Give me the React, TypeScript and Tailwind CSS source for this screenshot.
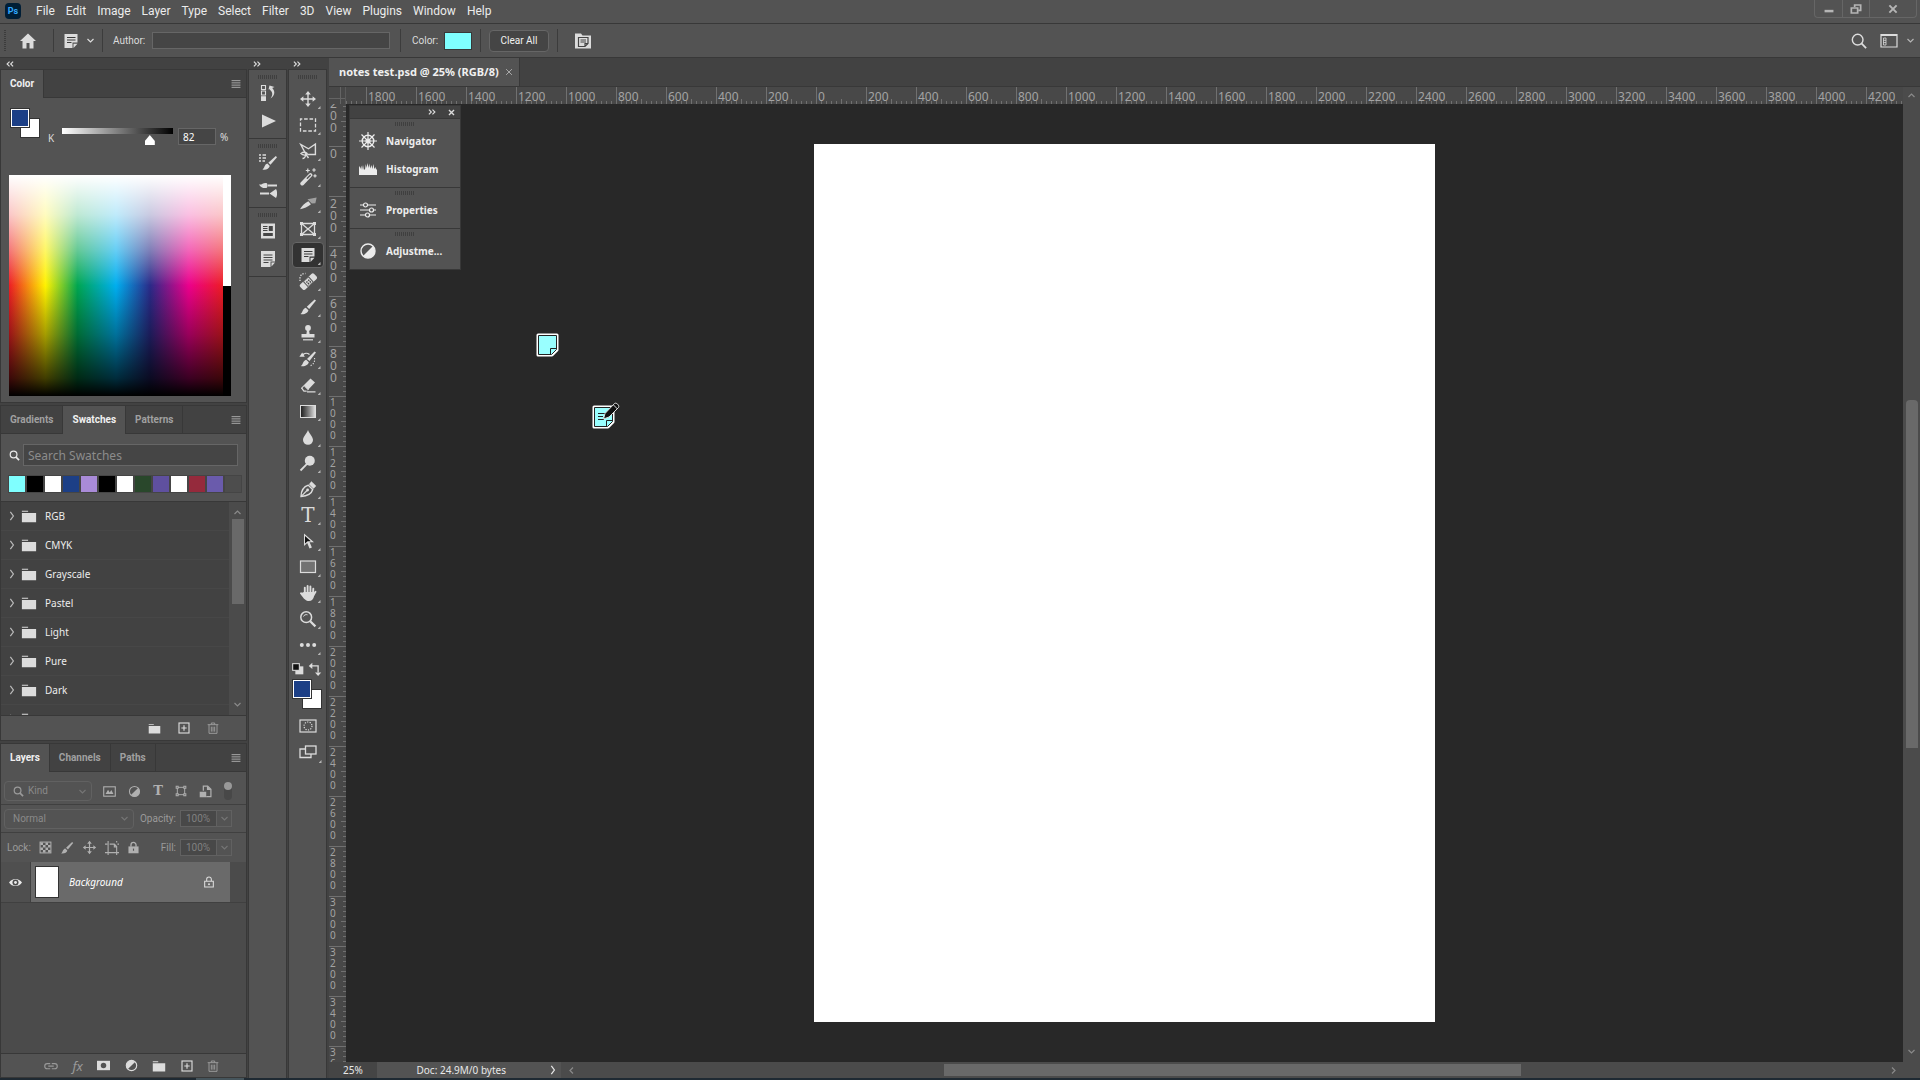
import { useState } from "react"
import type { ReactNode } from "react"

const menus = ["File", "Edit", "Image", "Layer", "Type", "Select", "Filter", "3D", "View", "Plugins", "Window", "Help"]

const swatches = [
    "bg-[#7fffff]",
    "bg-black",
    "bg-white",
    "bg-[#1c3f86]",
    "bg-[#a98bd8]",
    "bg-black",
    "bg-white",
    "bg-[#29472b]",
    "bg-[#5f509f]",
    "bg-white",
    "bg-[#952a3c]",
    "bg-[#6a5bac]",
    "bg-[#4d4d4d]",
]

const swatchGroups = ["RGB", "CMYK", "Grayscale", "Pastel", "Light", "Pure", "Dark", "Pale"]

const tools = [
    "move",
    "marquee",
    "lasso",
    "wand",
    "slice",
    "frame",
    "note",
    "heal",
    "brush",
    "stamp",
    "history-brush",
    "eraser",
    "gradient",
    "blur",
    "dodge",
    "pen",
    "type",
    "path-select",
    "rectangle",
    "hand",
    "zoom",
    "more",
]

const horizontalMarks = Array.from({ length: 32 }, (_, i) => Math.abs(i * 200 - 2000))
const verticalMarks = Array.from({ length: 20 }, (_, i) => Math.abs(i * 200 - 200))

// every icon is drawn on an 18 x 18 grid
const icons: Record<string, ReactNode> = {
    move: (
        <>
            <path d="M9 3v12M3 9h12" stroke="currentColor" strokeWidth="1.4" />
            <path d="M9 1l2.8 3.4H6.2zM9 17l2.8-3.4H6.2zM1 9l3.4-2.8v5.6zM17 9l-3.4-2.8v5.6z" />
        </>
    ),
    marquee: <rect x="1.5" y="3" width="15" height="12" fill="none" stroke="currentColor" strokeWidth="1.3" strokeDasharray="3.6 1.8" strokeDashoffset="1.8" />,
    lasso: (
        <g fill="none" stroke="currentColor" strokeWidth="1.4">
            <path d="M6 10.5L1.8 2.5L9.5 6.8L16.4 2V12.5H8.5" />
            <path d="M8.5 12.5C8 10 4.5 9.5 2 11.5C4 13.5 7.5 13.5 8.5 12.5M6.5 13C6.5 15 5 16.5 3.5 16.5M6 11l3.5 5" />
        </g>
    ),
    wand: (
        <>
            <path d="M3.2 15.6L11.5 7" stroke="currentColor" strokeWidth="3.8" strokeLinecap="round" />
            <path d="M8.3 10.3L11.3 7.2" stroke="#535353" strokeWidth="1.4" strokeLinecap="round" />
            <path d="M8.8.5v4M6.8 2.5h4M15 .2v3.6M13.2 2h3.6M16 6.2v3.2M14.4 7.8h3.2" stroke="currentColor" strokeWidth="1.2" />
        </>
    ),
    slice: (
        <>
            <path d="M1 15.2C3 11.5 6 8.8 9.3 7.2L12 10.3C8.8 13 5 14.6 1 15.2z" />
            <path d="M8.5 5.2L17.6 3.6L16.4 9.2L12.8 9.6z" fill="#a0a0a0" />
        </>
    ),
    frame: (
        <>
            <path d="M2.5 3.5h13v11h-13zM2.5 3.5l13 11M15.5 3.5l-13 11" fill="none" stroke="currentColor" strokeWidth="1.3" />
            <path d="M1 2h3v3H1zM14 2h3v3h-3zM1 13h3v3H1zM14 13h3v3h-3z" />
        </>
    ),
    note: (
        <>
            <path d="M2.5 2h13v8.5h-5V16h-8z" />
            <path d="M11.5 11.7h4L11.5 16z" />
            <path d="M5 5.5h8.5M5 8h8.5M5 10.5h4.5" stroke="#3a3a3a" strokeWidth="1" />
        </>
    ),
    heal: (
        <>
            <g transform="rotate(-43 9 10)">
                <rect x="0" y="6.4" width="19" height="7.2" rx="2" />
                <rect x="5.4" y="6.4" width="8" height="7.2" fill="#535353" />
                <rect x="6.4" y="7" width="6" height="6" />
                <path d="M7.5 8.5h1.5V10H7.5zM10 8.5h1.5V10H10zM7.5 10.7h1.5v1.5H7.5zM10 10.7h1.5v1.5H10z" fill="#454545" />
            </g>
            <path d="M1 9V6C1 3.5 3 1.5 6.5 1.5" fill="none" stroke="currentColor" strokeWidth="1.3" strokeDasharray="1.3 1.3" />
        </>
    ),
    brush: (
        <>
            <path d="M15.6 1.4L17 2.6L10.2 11L7.8 8.8z" />
            <path d="M6.8 9.7l2.6 2.5C9 15 5.2 16.8 1.4 16C3.8 14.8 3.4 10.6 6.8 9.7z" />
        </>
    ),
    stamp: (
        <>
            <circle cx="9" cy="4" r="2.9" />
            <path d="M8 6h2l.6 4h4.9v3.4h-13V10h4.9z" />
            <path d="M4 15.8h10" stroke="currentColor" strokeWidth="1.2" />
        </>
    ),
    "history-brush": (
        <>
            <path d="M15.5 1.4L17 2.6L10.5 11L8 8.9z" />
            <path d="M7.2 9.7l2.6 2.5C9.4 15 5.6 16.8 1.8 16C4.2 14.8 3.8 10.6 7.2 9.7z" />
            <path d="M.4 6.8L3.2 2.6L5.8 6.8z" />
            <path d="M3.5 5.2C5.5 2.8 8.5 3 10.5 4.5" fill="none" stroke="currentColor" strokeWidth="1.3" />
            <path d="M15.5 8c.8 3.5-1 6.5-4.5 8" fill="none" stroke="currentColor" strokeWidth="1.1" strokeDasharray="1.2 1.5" />
        </>
    ),
    eraser: (
        <>
            <path d="M2 12L11.5 2.5L16 6.5L7.5 15.5H4.5z" />
            <path d="M5.5 9.8l4 4l-1.8 1.2H5L3.2 12.2z" fill="#535353" />
            <path d="M5.5 9.8l4 4M2.6 12l2.4 3h2.5M8 15.8h8.5" fill="none" stroke="currentColor" strokeWidth="1.2" />
        </>
    ),
    blur: <path d="M9 2C10 5.5 14 8.5 14 12a5 4.8 0 0 1-10 0C4 8.5 8 5.5 9 2z" />,
    dodge: (
        <>
            <circle cx="10.8" cy="6.8" r="5" />
            <path d="M1.5 16.5L8 9.8" stroke="currentColor" strokeWidth="1.8" />
        </>
    ),
    pen: (
        <>
            <path d="M2 16.5C2.2 11 3.5 7 9.3 5.2L13.7 9.5C12.5 14 8 16 2 16.5z" fill="none" stroke="currentColor" strokeWidth="1.4" />
            <path d="M2.2 16.3L8 10.5" stroke="currentColor" strokeWidth="1.2" />
            <circle cx="8.6" cy="10" r="1.4" />
            <path d="M10 4.3L12.4 1.3L17.2 6L14.5 8.7z" />
        </>
    ),
    "path-select": (
        <>
            <path d="M5 1.5V14l3.2-3l2.3 5.5l2.4-1L10.6 10.2H15z" />
            <path d="M6 4v7.5L8.6 9.3L11.8 9.2z" fill="#111" />
        </>
    ),
    rectangle: <rect x="1.5" y="3" width="15" height="11.5" fill="#727272" stroke="currentColor" strokeWidth="1.2" />,
    hand: (
        <>
            <path d="M5.8 9V3.6M8.6 8V2M11.4 8V2.5M14 10L14.3 4.8M5.2 12L2 9.3M14.3 11.5L16.5 7.8" stroke="currentColor" strokeWidth="1.9" strokeLinecap="round" />
            <path d="M4.9 8h10.2v3.5c-.3 3.5-2.2 5.5-5.3 5.5c-2.6 0-4.6-1.2-8.5-7.5z" />
        </>
    ),
    zoom: (
        <>
            <circle cx="7.2" cy="7.2" r="5.4" fill="none" stroke="currentColor" strokeWidth="1.5" />
            <path d="M4.5 6.5C5 5 6.8 4.2 8.5 4.8" fill="none" stroke="currentColor" strokeWidth="1" />
            <path d="M11.2 11.2L16.4 16.4" stroke="currentColor" strokeWidth="2.2" />
        </>
    ),
    find: (
        <>
            <circle cx="7.5" cy="7.5" r="6" fill="none" stroke="currentColor" strokeWidth="1.6" />
            <path d="M11.8 11.8L17 17" stroke="currentColor" strokeWidth="2" />
        </>
    ),
    more: (
        <>
            <circle cx="2.8" cy="9" r="2" />
            <circle cx="9" cy="9" r="2" />
            <circle cx="15.2" cy="9" r="2" />
        </>
    ),
    defaults: (
        <>
            <path d="M6 6h9v9H6z" />
            <rect x="3" y="3" width="7.5" height="7.5" fill="#111" stroke="currentColor" strokeWidth="1.2" />
        </>
    ),
    swap: (
        <>
            <path d="M5 5.5h7.5V13" fill="none" stroke="currentColor" strokeWidth="1.5" />
            <path d="M2 5.5l4-3.5v7zM12.5 17l-3.5-4h7z" />
        </>
    ),
    mask: (
        <>
            <rect x="1" y="3" width="16" height="12" fill="none" stroke="currentColor" strokeWidth="1.2" />
            <circle cx="9" cy="9" r="4" fill="none" stroke="currentColor" strokeWidth="1.2" strokeDasharray="1.2 1.3" />
        </>
    ),
    screen: (
        <>
            <path d="M6 6H1v8.5h11V11" fill="none" stroke="currentColor" strokeWidth="1.3" />
            <rect x="6.5" y="3" width="10.5" height="8" fill="#535353" stroke="currentColor" strokeWidth="1.3" />
        </>
    ),
    history: (
        <>
            <path d="M2.5 1.5h4v4h-4zM2.5 7h4v4h-4z" fill="none" stroke="currentColor" strokeWidth="1.1" />
            <path d="M2 12.2h5V17H2z" />
            <path d="M9.5 5.5L10.5 1.5L15.5 3z" />
            <path d="M12 3C16.5 6 16.5 11.5 11.5 14.5C14 11 14 8 10.5 5.5z" />
        </>
    ),
    play: <path d="M3 2.5L17 9L3 15.5z" />,
    brushes: (
        <>
            <path d="M0 2h2M3.5 2h3.5M0 5h2M3.5 5h3.5M0 8h2M3.5 8h2.5" stroke="currentColor" strokeWidth="1.3" />
            <path d="M16.8 3L18 4.2L11.5 11.8L9.3 9.8z" />
            <path d="M8.4 10.6l2.4 2.3C10 15.8 7 17.2 3.5 16.5C5.8 15.2 5.2 11.4 8.4 10.6z" />
        </>
    ),
    "brush-settings": (
        <>
            <path d="M9 4.5h9M1 12.5h9" stroke="currentColor" strokeWidth="2.2" />
            <path d="M0 3.5C3 4 4 1.5 7.5 2C9 3 9 6 7.5 7C4 7.5 2 6.5 0 3.5z" />
            <path d="M10.5 12.5L17 8C18.5 10.5 18.5 14.5 17 17z" />
        </>
    ),
    libraries: (
        <>
            <path d="M2 1.5h14v15H2z" />
            <path d="M4 4.5h4.5M4 6.5h4.5M4 8.5h4.5" stroke="#454545" strokeWidth="1" />
            <path d="M9.8 4h4v5h-4zM4.2 11h9.6v3H4.2z" fill="#454545" />
        </>
    ),
    notes: (
        <>
            <path d="M2 1h14v10.5h-4.5V17H2z" />
            <path d="M12.5 12.5H16L12.5 16.5z" />
            <path d="M4.5 5h9M4.5 7.5h9M4.5 10h9M4.5 12.5h5" stroke="#454545" strokeWidth="1" />
        </>
    ),
    home: <path d="M9 1.5L1 9h2.5v7.5h4V11h3v5.5h4V9H17z" />,
    "notes-panel": (
        <>
            <path d="M1 1.5h6l1.5 2H17v13H1z" />
            <path d="M4.5 5.5h9.5v6l-3 3H4.500zM11 14.5v-3h3" fill="none" stroke="#454545" strokeWidth="1.2" />
            <path d="M6.5 8h5.5M6.5 10h5.5" stroke="#454545" strokeWidth="1" />
        </>
    ),
    navigator: (
        <g fill="none" stroke="currentColor">
            <circle cx="9" cy="9" r="5.8" strokeWidth="1.4" />
            <circle cx="9" cy="9" r="2" strokeWidth="1.2" />
            <path d="M9 0v18M0 9h18M2.5 2.5l13 13M15.5 2.5l-13 13" strokeWidth="1.2" />
        </g>
    ),
    histogram: <path d="M0 15V7.5l.8-1.500L1.5 9l.8-3.500L3 10l1-5l.8 4.500L6 9.500L6.800 4L7.500 8l1-5l1 5L10.300 3.500l.9 5L12.500 5l.8 4L14.500 4l.8 5L16.500 7l.7 3L18 8.500V15z" />,
    properties: (
        <g fill="none" stroke="currentColor" strokeWidth="1.2">
            <path d="M1 4h3.5M8.5 4H17M1 9h9.5M14.5 9H17M1 14h5.5M10.5 14H17" />
            <circle cx="6.5" cy="4" r="2" />
            <circle cx="12.5" cy="9" r="2" />
            <circle cx="8.5" cy="14" r="2" />
        </g>
    ),
    adjust: (
        <>
            <circle cx="9" cy="9" r="7" fill="none" stroke="currentColor" strokeWidth="1.4" />
            <path d="M14 4A7 7 0 0 1 4 14z" />
        </>
    ),
    "adjust-layer": (
        <>
            <circle cx="9" cy="9" r="7" />
            <path d="M14 4A7 7 0 0 1 4 14z" fill="#535353" />
            <circle cx="9" cy="9" r="7.2" fill="none" stroke="currentColor" strokeWidth="1.6" />
        </>
    ),
    folder: <path d="M1 3h7v1.3H1zM1 5.5h16V16H1z" />,
    add: (
        <>
            <rect x="1.5" y="1.5" width="15" height="15" fill="none" stroke="currentColor" strokeWidth="1.7" />
            <path d="M9 5v8M5 9h8" stroke="currentColor" strokeWidth="1.7" />
        </>
    ),
    trash: (
        <g fill="none" stroke="currentColor" strokeWidth="1.5">
            <path d="M1 4h16M6.5 4V1.5h5V4M3 4.5V17h12V4.5M6.5 7v7.5M9 7v7.5M11.5 7v7.5" />
        </g>
    ),
    search: (
        <>
            <circle cx="7.5" cy="7.5" r="5.5" fill="none" stroke="currentColor" strokeWidth="2" />
            <path d="M11.5 11.5L16.5 16.5" stroke="currentColor" strokeWidth="2.8" />
        </>
    ),
    image: (
        <>
            <rect x="1" y="2.5" width="16" height="13" fill="none" stroke="currentColor" strokeWidth="1.5" />
            <path d="M3.5 12.5L7 6.5l2.3 4L11.5 7l3 5.5z" />
        </>
    ),
    shape: (
        <>
            <path d="M3.5 3.5h11v11h-11z" fill="none" stroke="currentColor" strokeWidth="1.4" />
            <path d="M1 1h4.5v4.5H1zM12.5 1H17v4.5h-4.5zM1 12.5h4.5V17H1zM12.5 12.5H17V17h-4.5z" />
            <path d="M2.5 2.5h1.5v1.5H2.5zM14 2.5h1.5v1.5H14zM2.5 14h1.5v1.5H2.5zM14 14h1.5v1.5H14z" fill="#535353" />
        </>
    ),
    smart: (
        <>
            <path d="M6 8V1.5h6l4.5 4.5v10H10" fill="none" stroke="currentColor" strokeWidth="1.7" />
            <path d="M11 1v6h6M1 9.5h9V17H1z" />
        </>
    ),
    checker: (
        <>
            <rect x="1.5" y="1.5" width="15" height="15" fill="none" stroke="currentColor" strokeWidth="1.4" />
            <path d="M2 2h3.5v3.5H2zM9 2h3.5v3.5H9zM5.5 5.5H9V9H5.5zM12.5 5.5H16V9h-3.5zM2 9h3.5v3.5H2zM9 9h3.5v3.5H9zM5.5 12.5H9V16H5.5zM12.5 12.5H16V16h-3.5z" />
        </>
    ),
    artboard: (
        <g fill="none" stroke="currentColor" strokeWidth="1.4">
            <path d="M4 0v18M0 4h3M6 4h6l3 3v11M0 15h18M12 4v3.5h3.5" />
            <path d="M16 4h2M15 0v2" />
        </g>
    ),
    lock: (
        <>
            <path d="M5.5 8V5.5a3.5 3.5 0 0 1 7 0V8" fill="none" stroke="currentColor" strokeWidth="1.8" />
            <path d="M2 7.5h14V17H2z" />
            <path d="M8.2 10.5h1.6v3H8.2z" fill="#535353" />
        </>
    ),
    "lock-outline": (
        <>
            <path d="M5.5 8V5a3.5 3.5 0 0 1 7 0v3M2.5 8h13v8.5h-13z" fill="none" stroke="currentColor" strokeWidth="1.6" />
            <circle cx="9" cy="12.2" r="1.5" />
        </>
    ),
    eye: (
        <>
            <path d="M0 9C4 2.5 14 2.5 18 9C14 15.5 4 15.5 0 9z" />
            <circle cx="9" cy="9" r="4.2" fill="#4b4b4b" />
            <circle cx="9" cy="9" r="2" />
        </>
    ),
    link: (
        <g fill="none" stroke="currentColor" strokeWidth="1.5">
            <path d="M8 6H4.2a3 3 0 0 0 0 6.5H8M10 6h3.8a3 3 0 0 1 0 6.5H10M5.5 9.2h7" />
        </g>
    ),
    "layer-mask": (
        <>
            <path d="M0 2.5h18v13H0z" />
            <circle cx="9" cy="9" r="3.8" fill="#535353" />
        </>
    ),
    workspace: (
        <>
            <path d="M1 2.5h16v12.5H1z" fill="none" stroke="currentColor" strokeWidth="1.2" />
            <path d="M1 2h16v2H1z" />
            <path d="M3.5 6h2.5v7H3.5zM3.5 8.3h2.5M3.5 10.6h2.5" fill="none" stroke="currentColor" strokeWidth=".8" />
        </>
    ),
    "chevron-down": <path d="M3 6l6 6l6-6" fill="none" stroke="currentColor" strokeWidth="2.4" />,
    "chevron-up": <path d="M3 12l6-6l6 6" fill="none" stroke="currentColor" strokeWidth="2.4" />,
    "chevron-right": <path d="M6 1.5l5.5 7.5L6 16.5" fill="none" stroke="currentColor" strokeWidth="2.2" />,
    "chevron-left": <path d="M12 3L6 9l6 6" fill="none" stroke="currentColor" strokeWidth="2.4" />,
    expand: <path d="M2 3.5L7.5 9L2 14.5M10 3.5L15.5 9L10 14.5" fill="none" stroke="currentColor" strokeWidth="2.6" />,
    collapse: <path d="M8 3.5L2.5 9L8 14.5M16 3.5L10.5 9L16 14.5" fill="none" stroke="currentColor" strokeWidth="2.6" />,
    close: <path d="M2.5 2.5l13 13M15.5 2.5l-13 13" stroke="currentColor" strokeWidth="3.5" />,
    "close-thin": <path d="M2.5 2.5l13 13M15.5 2.5l-13 13" stroke="currentColor" strokeWidth="2" />,
    minimize: <path d="M1 10.5h16v4.5H1z" />,
    restore: (
        <g fill="none" stroke="currentColor" strokeWidth="2.6">
            <path d="M7 6V3h9v8h-3M2 7.5h9.5V15H2z" />
        </g>
    ),
    menu: <path d="M1 3h16M1 7h16M1 11h16M1 15h16" stroke="currentColor" strokeWidth="1.6" />,
}

const Icon = ({ name, className = "size-[18px]" }: { name: string; className?: string }) => (
    <svg viewBox="0 0 18 18" fill="currentColor" className={`shrink-0 ${className}`}>
        {icons[name]}
    </svg>
)

const ToolIcon = ({ name }: { name: string }) => {
    if (name === "type") return <span className="pl-px font-['DejaVu_Serif',serif] text-[20px] leading-5">T</span>
    if (name === "gradient") return <span className="h-[13px] w-4 border border-[#dcdcdc] bg-linear-to-r from-[#222] to-[#ddd]" />
    return <Icon name={name} />
}

const Grip = () => (
    <div className="mx-auto h-1 w-5 shrink-0 bg-[repeating-linear-gradient(to_right,#3f3f3f_0_1px,transparent_1px_2px)]" />
)

const Separator = () => <div className="h-[23px] w-px bg-[#3c3c3c]" />

const PanelTabs = ({ tabs, initial }: { tabs: string[]; initial: string }) => {
    const [active, setActive] = useState(initial)
    return (
        <div className="flex h-7 shrink-0 bg-[#424242]">
            {tabs.map((tab) => (
                <button
                    key={tab}
                    onClick={() => setActive(tab)}
                    className={`border-r border-[#383838] px-[9px] font-['Roboto','Noto_Sans',sans-serif] text-[10px] leading-4 font-bold ${
                        active === tab ? "bg-[#535353] text-[#f0f0f0]" : "border-b text-[#a0a0a0]"
                    }`}
                >
                    {tab}
                </button>
            ))}
            <div className="flex flex-1 items-center justify-end border-b border-[#383838] pr-[5px]">
                <button aria-label="Panel menu" className="text-[#b5b5b5]">
                    <Icon name="menu" className="size-[10px]" />
                </button>
            </div>
        </div>
    )
}

const ColorChips = ({ className = "" }: { className?: string }) => (
    <div className={`relative size-[30px] ${className}`}>
        <button aria-label="Background color" className="absolute right-0 bottom-0 size-5 border border-[#333] bg-white" />
        <button aria-label="Foreground color" className="absolute top-0 left-0 size-5 border border-[#333] bg-white p-px">
            <span className="block size-full bg-[#1c3f86]" />
        </button>
    </div>
)

const ColorPanel = () => {
    const [k, setK] = useState(82)
    return (
        <section className="border border-t-0 border-[#383838] bg-[#535353] pb-1.5">
            <PanelTabs tabs={["Color"]} initial="Color" />
            <div className="flex h-[77px] items-start pt-[10px] pl-[9px] text-[10px] leading-4 text-[#dcdcdc]">
                <ColorChips />
                <label htmlFor="k-slider" className="mt-[22px] ml-2 w-[14px]">
                    K
                </label>
                <input
                    id="k-slider"
                    type="range"
                    min={0}
                    max={100}
                    value={k}
                    onChange={(e) => setK(Number(e.target.value))}
                    className="mt-5 h-[18px] w-[111px] appearance-none bg-[linear-gradient(to_right,#fff,#000)] bg-[length:100%_6px] bg-no-repeat [&::-webkit-slider-runnable-track]:h-[18px] [&::-webkit-slider-thumb]:mt-[7px] [&::-webkit-slider-thumb]:h-[10px] [&::-webkit-slider-thumb]:w-[10px] [&::-webkit-slider-thumb]:appearance-none [&::-webkit-slider-thumb]:bg-white [&::-webkit-slider-thumb]:[clip-path:polygon(50%_0,100%_60%,100%_100%,0_100%,0_60%)]"
                />
                <input
                    aria-label="K value"
                    value={k}
                    onChange={(e) => setK(Number(e.target.value) || 0)}
                    className="mt-5 ml-[5px] h-[17px] w-[38px] border border-[#666] bg-[#454545] pl-1 text-white"
                />
                <span className="mt-[21px] ml-1">%</span>
            </div>
            <div className="ml-2 flex h-[221px] w-[222px]">
                <div className="flex-1 bg-[linear-gradient(to_bottom,#fff_0%,rgba(255,255,255,0.75)_18%,rgba(255,255,255,0.4)_34%,transparent_50%,rgba(0,0,0,0.35)_72%,rgba(0,0,0,0.75)_92%,#000_100%),linear-gradient(to_right,#ed1c24,#fff200_17%,#00a651_32%,#00aeef_50%,#2b2a88_66%,#ec008c_84%,#ed1c24)]" />
                <div className="flex w-2 flex-col">
                    <div className="flex-1 bg-white" />
                    <div className="flex-1 bg-black" />
                </div>
            </div>
        </section>
    )
}

const SwatchesPanel = () => (
    <section className="border border-[#383838] bg-[#535353]">
        <PanelTabs tabs={["Gradients", "Swatches", "Patterns"]} initial="Swatches" />
        <div className="flex h-[42px] items-center gap-[3px] pr-2 pl-2">
            <Icon name="search" className="size-[11px] text-[#e8e8e8]" />
            <input
                aria-label="Search Swatches"
                placeholder="Search Swatches"
                className="h-[22px] min-w-0 flex-1 border border-[#666] bg-[#454545] px-1 text-[12px] leading-5 text-white placeholder:text-[#8c8c8c]"
            />
        </div>
        <div className="flex h-[25px] gap-0.5 pl-2">
            {swatches.map((color, i) => (
                <button key={i} aria-label={`Swatch ${i + 1}`} className={`size-4 outline outline-[#454545] ${color}`} />
            ))}
        </div>
        <div className="flex h-[214px] border-t border-[#383838]">
            <ul className="flex-1 overflow-hidden bg-[#424242]">
                {swatchGroups.map((group) => (
                    <li key={group} className="h-[29px] border-b border-[#474747]">
                        <button className="flex h-full w-full items-center pl-1.5 text-[10px] text-[#ececec]">
                            <Icon name="chevron-right" className="size-[10px] text-[#bbb]" />
                            <Icon name="folder" className="mr-2 ml-1 size-[16px] text-[#dcdcdc]" />
                            {group}
                        </button>
                    </li>
                ))}
            </ul>
            <div className="flex w-[17px] flex-col items-center bg-[#4b4b4b] py-1.5 text-[#8a8a8a]">
                <Icon name="chevron-up" className="size-[9px]" />
                <div className="mt-0.5 h-[85px] w-3 bg-[#696969]" />
                <Icon name="chevron-down" className="mt-auto size-[9px]" />
            </div>
        </div>
        <div className="flex h-[25px] items-center justify-end gap-[17px] border-t border-[#383838] pr-[27px] text-[#dcdcdc]">
            <button aria-label="New group">
                <Icon name="folder" className="size-[13px]" />
            </button>
            <button aria-label="New swatch">
                <Icon name="add" className="size-[12px]" />
            </button>
            <button aria-label="Delete swatch" className="text-[#999]">
                <Icon name="trash" className="size-[12px]" />
            </button>
        </div>
    </section>
)

const PercentField = ({ id, label }: { id: string; label: string }) => (
    <div className="flex items-center gap-1">
        <label htmlFor={id}>{label}</label>
        <div className="flex h-[17px] w-[52px] border border-[#616161]">
            <input id={id} defaultValue="100%" className="w-[35px] bg-[#484848] pl-[5px] text-[#808080]" />
            <button aria-label={`${label} slider`} className="flex flex-1 items-center justify-center border-l border-[#616161] text-[#757575]">
                <Icon name="chevron-down" className="size-[9px]" />
            </button>
        </div>
    </div>
)

const LayersPanel = () => (
    <section className="flex min-h-0 flex-1 flex-col border border-[#383838] bg-[#535353]">
        <PanelTabs tabs={["Layers", "Channels", "Paths"]} initial="Layers" />
        <div className="flex h-[33px] items-center border-b border-[#404040] pt-2 pb-0.5 pl-[3px] font-['Roboto','Noto_Sans',sans-serif] text-[10px] leading-4 text-[#9a9a9a]">
            <div className="flex h-5 w-[88px] items-center rounded-sm border border-[#616161] pr-1 pl-2">
                <Icon name="search" className="size-[11px]" />
                <select aria-label="Filter kind" className="flex-1 appearance-none pl-1 text-[#8a8a8a]">
                    <option>Kind</option>
                </select>
                <Icon name="chevron-down" className="size-[9px] text-[#757575]" />
            </div>
            <div className="flex flex-1 items-center justify-between pr-[12px] pl-[11px] text-[#b0b0b0]">
                <Icon name="image" className="size-[13px]" />
                <Icon name="adjust" className="size-[13px]" />
                <span className="font-['DejaVu_Serif',serif] text-[13px] leading-4 font-bold">T</span>
                <Icon name="shape" className="size-[12px]" />
                <Icon name="smart" className="size-[13px]" />
            </div>
            <button aria-label="Toggle filter" className="mr-[14px] flex h-[18px] w-2 items-start rounded-full bg-[#484848]">
                <span className="size-2 rounded-full bg-[#999]" />
            </button>
        </div>
        <div className="flex h-7 items-center justify-between border-b border-[#404040] pr-[14px] pl-[3px] font-['Roboto','Noto_Sans',sans-serif] text-[10px] leading-4 text-[#9a9a9a]">
            <div className="flex h-5 w-[130px] items-center rounded-sm border border-[#616161] pr-1 pl-2">
                <select aria-label="Blend mode" className="flex-1 appearance-none text-[#8a8a8a]">
                    <option>Normal</option>
                </select>
                <Icon name="chevron-down" className="size-[9px] text-[#757575]" />
            </div>
            <PercentField id="opacity" label="Opacity:" />
        </div>
        <div className="flex h-[29px] items-center pr-[14px] pl-1.5 font-['Roboto','Noto_Sans',sans-serif] text-[10px] leading-4 text-[#9a9a9a]">
            <span className="w-8">Lock:</span>
            <div className="flex flex-1 items-center gap-2 text-[#b0b0b0]">
                <Icon name="checker" className="size-[13px]" />
                <Icon name="brush" className="size-[14px]" />
                <Icon name="move" className="size-[15px]" />
                <Icon name="artboard" className="size-[14px]" />
                <Icon name="lock" className="size-[13px]" />
            </div>
            <PercentField id="fill" label="Fill:" />
        </div>
        <div className="min-h-0 flex-1 bg-[#4b4b4b]">
            <div className="flex h-[41px] border-b border-[#404040]">
                <button aria-label="Layer visibility" className="flex w-[30px] items-center justify-center border-r border-[#404040] bg-[#4f4f4f] text-[#e8e8e8]">
                    <Icon name="eye" className="size-[13px]" />
                </button>
                <div className="mr-4 flex flex-1 items-center bg-[#6a6a6a] pr-[15px] pl-1 text-white">
                    <div className="mr-[10px] h-8 w-6 border border-[#333] bg-white" />
                    <span className="flex-1 text-[10px] italic">Background</span>
                    <Icon name="lock-outline" className="size-[12px] text-[#dcdcdc]" />
                </div>
            </div>
        </div>
        <div className="flex h-6 items-center justify-between border-t border-[#383838] pr-[27px] pl-[43px] text-[#dcdcdc]">
            <button aria-label="Link layers" className="text-[#999]">
                <Icon name="link" className="size-[14px]" />
            </button>
            <button aria-label="Layer style" className="text-[13px] leading-4 text-[#999] italic">
                fx
            </button>
            <button aria-label="Add mask">
                <Icon name="layer-mask" className="size-[13px]" />
            </button>
            <button aria-label="New adjustment layer">
                <Icon name="adjust-layer" className="size-[13px]" />
            </button>
            <button aria-label="New group">
                <Icon name="folder" className="size-[14px]" />
            </button>
            <button aria-label="New layer">
                <Icon name="add" className="size-[12px]" />
            </button>
            <button aria-label="Delete layer" className="text-[#999]">
                <Icon name="trash" className="size-[12px]" />
            </button>
        </div>
    </section>
)

const IconDock = () => {
    const groups = [
        ["history", "play"],
        ["brushes", "brush-settings"],
        ["libraries", "notes"],
    ]
    return (
        <div className="w-[39px] flex-1 border-x border-[#383838] bg-[#535353]">
            {groups.map((group) => (
                <div key={group[0]} className="flex h-[69px] flex-col border-b border-[#383838] pt-[5px] text-[#dcdcdc]">
                    <Grip />
                    {group.map((name) => (
                        <button key={name} aria-label={name} className="flex h-7 items-center justify-center">
                            <Icon name={name} />
                        </button>
                    ))}
                </div>
            ))}
        </div>
    )
}

const Toolbar = () => {
    const [active, setActive] = useState("note")
    return (
        <div className="flex w-[39px] flex-1 flex-col items-center border-x border-[#383838] bg-[#535353] pt-[5px] text-[#dcdcdc]">
            <Grip />
            <div className="mt-[7px] flex flex-col">
                {tools.map((tool) => (
                    <button
                        key={tool}
                        aria-label={tool}
                        onClick={() => setActive(tool)}
                        className={`relative flex h-[26px] w-8 items-center justify-center rounded-sm border ${
                            active === tool ? "border-[#666] bg-[#323232]" : "border-transparent"
                        }`}
                    >
                        <ToolIcon name={tool} />
                        <span className="absolute right-0.5 bottom-0.5 size-[3px] bg-[#b5b5b5] [clip-path:polygon(100%_0,100%_100%,0_100%)]" />
                    </button>
                ))}
            </div>
            <div className="mt-[3px] mr-0.5 flex gap-px">
                <button aria-label="Default colors">
                    <Icon name="defaults" className="size-[16px]" />
                </button>
                <button aria-label="Swap colors">
                    <Icon name="swap" className="size-[16px]" />
                </button>
            </div>
            <ColorChips className="mt-0.5 mr-0.5" />
            <button aria-label="Quick mask" className="mt-1 flex h-[26px] items-center">
                <Icon name="mask" />
            </button>
            <button aria-label="Screen mode" className="relative flex h-[26px] w-8 items-center justify-center">
                <Icon name="screen" />
                <span className="absolute right-0.5 bottom-0.5 size-[3px] bg-[#b5b5b5] [clip-path:polygon(100%_0,100%_100%,0_100%)]" />
            </button>
        </div>
    )
}

const FloatingPanel = () => {
    const groups = [
        [
            { icon: "navigator", label: "Navigator" },
            { icon: "histogram", label: "Histogram" },
        ],
        [{ icon: "properties", label: "Properties" }],
        [{ icon: "adjust", label: "Adjustme..." }],
    ]
    return (
        <div className="absolute top-px left-[3px] w-[112px] border border-[#383838] bg-[#535353]">
            <div className="flex h-3 items-center justify-end gap-3 bg-[#424242] pr-[5px] text-[#dcdcdc]">
                <Icon name="expand" className="size-2" />
                <button aria-label="Close panel">
                    <Icon name="close" className="size-[7px]" />
                </button>
            </div>
            {groups.map((group) => (
                <div key={group[0].icon} className="border-t border-[#383838] pt-[3px] pb-1">
                    <Grip />
                    <div className="mt-px">
                        {group.map((item) => (
                            <button key={item.icon} className="flex h-7 w-full items-center gap-[9px] pl-[9px] text-[10px] font-bold text-[#ececec]">
                                <Icon name={item.icon} />
                                {item.label}
                            </button>
                        ))}
                    </div>
                </div>
            ))}
        </div>
    )
}

const StickyNote = ({ editing = false }: { editing?: boolean }) => (
    <svg viewBox="0 0 28 28" className="size-7">
        <path d="M2 5h19v15l-5 5H2z" fill="#9ff" stroke="#fff" strokeWidth="3" strokeLinejoin="round" />
        <path d="M2.5 5.5h18v14l-5 5h-13z" fill="#9ff" stroke="#222" />
        <path d="M14.5 24v-5.5h6" fill="none" stroke="#222" />
        {editing && (
            <>
                <path d="M6 11.5h7M6 14.5h5M6 17.5h6" stroke="#222" />
                <path d="M11.5 17L13 11.5L22.5 1.5C24 0 28 3.5 26.5 5.5L17 15z" fill="#111" stroke="#ddd" />
                <path d="M21.5 3l4 4" stroke="#ddd" />
            </>
        )}
    </svg>
)

const Document = () => (
    <main className="flex min-w-0 flex-1 flex-col">
        <div className="flex h-7 bg-[#424242]">
            <div className="flex items-center gap-1.5 border-r border-[#383838] bg-[#535353] pr-1.5 pl-[10px] text-[#f0f0f0]">
                <button className="text-[11px] leading-4 font-bold">notes test.psd @ 25% (RGB/8)</button>
                <button aria-label="Close document" className="text-[#b5b5b5]">
                    <Icon name="close-thin" className="size-[8px]" />
                </button>
            </div>
        </div>
        <div className="flex h-[18px] border-t border-[#383838] bg-[#484848]">
            <div className="w-[17px] shrink-0 border-r border-[#666] bg-[linear-gradient(to_right,transparent_11px,#777_11px_12px,transparent_12px),linear-gradient(to_bottom,transparent_11px,#777_11px_12px,transparent_12px)] opacity-60" />
            <div className="min-w-0 flex-1 overflow-hidden">
                <div className="-ml-[30px] flex">
                    {horizontalMarks.map((mark, i) => (
                        <div
                            key={i}
                            className="h-[17px] w-[50px] shrink-0 border-l border-[#707070] bg-[linear-gradient(to_right,transparent_24px,#707070_24px_25px,transparent_25px),repeating-linear-gradient(to_right,transparent_0_4px,#707070_4px_5px)] bg-[length:100%_5px,100%_3px] bg-bottom bg-no-repeat pl-px text-[12px] leading-5 text-[#a3a3a3]"
                        >
                            {i > 0 && mark}
                        </div>
                    ))}
                </div>
            </div>
            <div className="flex w-[17px] shrink-0 items-center justify-center bg-[#4b4b4b] text-[#8a8a8a]">
                <Icon name="chevron-up" className="size-[9px]" />
            </div>
        </div>
        <div className="flex min-h-0 flex-1">
            <div className="w-[17px] shrink-0 overflow-hidden bg-[#484848]">
                <div className="-mt-2">
                    {verticalMarks.map((mark, i) => (
                        <div
                            key={i}
                            className={`flex h-[50px] flex-col border-t border-[#707070] bg-[linear-gradient(to_bottom,transparent_24px,#707070_24px_25px,transparent_25px),repeating-linear-gradient(to_bottom,transparent_0_4px,#707070_4px_5px)] bg-[length:5px_100%,3px_100%] bg-right bg-no-repeat pl-px text-[#a3a3a3] ${
                                mark >= 1000 ? "text-[10px] leading-[11px]" : "pt-px text-[12px] leading-3"
                            }`}
                        >
                            {String(mark)
                                .split("")
                                .map((digit, j) => (
                                    <span key={j}>{digit}</span>
                                ))}
                        </div>
                    ))}
                </div>
            </div>
            <div className="relative min-w-0 flex-1 overflow-hidden bg-[#282828]">
                <div className="absolute top-[40px] left-[468px] h-[878px] w-[621px] bg-white" />
                <div className="absolute top-[226px] left-[190px]">
                    <StickyNote />
                </div>
                <div className="absolute top-[298px] left-[246px]">
                    <StickyNote editing />
                </div>
                <FloatingPanel />
            </div>
            <div className="flex w-[17px] shrink-0 flex-col items-center bg-[#4b4b4b] pb-1.5 text-[#8a8a8a]">
                <div className="mt-[296px] h-[348px] w-3 rounded-t-sm bg-[#696969]" />
                <Icon name="chevron-down" className="mt-auto size-[9px]" />
            </div>
        </div>
        <div className="flex h-4 items-center bg-[#4b4b4b] text-[10px] leading-4 text-[#e8e8e8]">
            <input aria-label="Zoom level" defaultValue="25%" className="h-4 w-12 bg-[#454545] pl-[14px]" />
            <button className="flex h-4 w-[184px] items-center justify-end gap-[42px] bg-[#535353] pr-[3px]">
                Doc: 24.9M/0 bytes
                <Icon name="chevron-right" className="size-[10px]" />
            </button>
            <Icon name="chevron-left" className="ml-[6px] size-[9px] text-[#8a8a8a]" />
            <div className="min-w-0 flex-1">
                <div className="ml-[28%] h-3 w-[44%] bg-[#696969]" />
            </div>
            <Icon name="chevron-left" className="mr-[22px] size-[9px] rotate-180 text-[#8a8a8a]" />
        </div>
    </main>
)

const App = () => {
    return (
        <div className="flex h-screen flex-col overflow-hidden bg-[#424242] font-['Noto_Sans',sans-serif] text-[#dcdcdc]">
            <header className="flex h-6 shrink-0 items-center justify-between border-b border-[#383838] bg-[#535353] pb-px">
                <nav className="flex items-center gap-[11px] pl-[5px] font-['Roboto','Noto_Sans',sans-serif] text-[12px] leading-4 text-[#ececec]">
                    <span className="mr-1 flex size-4 items-center justify-center rounded-sm bg-[#001e36] text-[9px] leading-4 font-bold text-[#31a8ff]">Ps</span>
                    {menus.map((menu) => (
                        <button key={menu}>{menu}</button>
                    ))}
                </nav>
                <div className="mr-[3px] flex h-[18px] self-start rounded-b-sm border border-t-0 border-[#666] text-[#b5b5b5]">
                    <button aria-label="Minimize" className="flex w-7 items-center justify-center border-r border-[#666]">
                        <Icon name="minimize" className="size-[10px]" />
                    </button>
                    <button aria-label="Restore" className="flex w-[27px] items-center justify-center border-r border-[#666]">
                        <Icon name="restore" className="size-[12px]" />
                    </button>
                    <button aria-label="Close" className="flex w-[46px] items-center justify-center">
                        <Icon name="close" className="size-[10px]" />
                    </button>
                </div>
            </header>

            <div className="flex h-[34px] shrink-0 items-center border-b border-[#383838] bg-[#535353] pl-1 text-[10px] leading-4">
                <div className="h-[22px] w-0.5 bg-[repeating-linear-gradient(to_bottom,#3c3c3c_0_1px,transparent_1px_2px)]" />
                <button aria-label="Home" className="mr-4 ml-[13px]">
                    <Icon name="home" />
                </button>
                <Separator />
                <button aria-label="Note tool presets" className="mr-[7px] ml-2 flex items-center gap-1.5">
                    <Icon name="note" />
                    <Icon name="chevron-down" className="size-[9px]" />
                </button>
                <Separator />
                <label htmlFor="author" className="ml-[10px] w-[39px] font-['Roboto','Noto_Sans',sans-serif]">
                    Author:
                </label>
                <input id="author" className="mr-[10px] h-[17px] w-[238px] border border-[#666] bg-[#454545] px-1" />
                <Separator />
                <span className="ml-[11px] w-8 font-['Roboto','Noto_Sans',sans-serif]">Color:</span>
                <button aria-label="Note color" className="mr-2 h-[18px] w-7 border border-[#383838] bg-[#7fffff]" />
                <Separator />
                <button className="mx-2 h-[22px] w-[60px] rounded-sm border border-[#666] bg-[#454545] font-['Roboto','Noto_Sans',sans-serif] text-[#f0f0f0]">
                    Clear All
                </button>
                <Separator />
                <button aria-label="Notes panel" className="ml-4">
                    <Icon name="notes-panel" />
                </button>
                <div className="mr-[5px] ml-auto flex items-center gap-[13px]">
                    <button aria-label="Search">
                        <Icon name="find" className="size-[16px]" />
                    </button>
                    <button aria-label="Workspace" className="flex items-center gap-2">
                        <Icon name="workspace" />
                        <Icon name="chevron-down" className="size-[9px] text-[#b5b5b5]" />
                    </button>
                </div>
            </div>

            <div className="flex min-h-0 flex-1">
                <aside className="flex w-[247px] shrink-0 flex-col gap-0.5">
                    <div>
                        <div className="flex h-3 items-center border-b border-[#383838] pl-1.5">
                            <Icon name="collapse" className="size-2" />
                        </div>
                        <ColorPanel />
                    </div>
                    <SwatchesPanel />
                    <LayersPanel />
                </aside>
                <div className="ml-px flex flex-col">
                    <div className="flex h-3 shrink-0 items-center border-b border-[#383838] pl-[5px]">
                        <Icon name="expand" className="size-2" />
                    </div>
                    <IconDock />
                </div>
                <div className="mr-0.5 ml-px flex flex-col">
                    <div className="flex h-3 shrink-0 items-center border-b border-[#383838] pl-[5px]">
                        <Icon name="expand" className="size-2" />
                    </div>
                    <Toolbar />
                </div>
                <Document />
            </div>

            <footer className="flex h-0.5 shrink-0 bg-[#1f2a33]">
                <div className="ml-[196px] w-12 bg-[#46555c]" />
            </footer>
        </div>
    )
}

export default App
